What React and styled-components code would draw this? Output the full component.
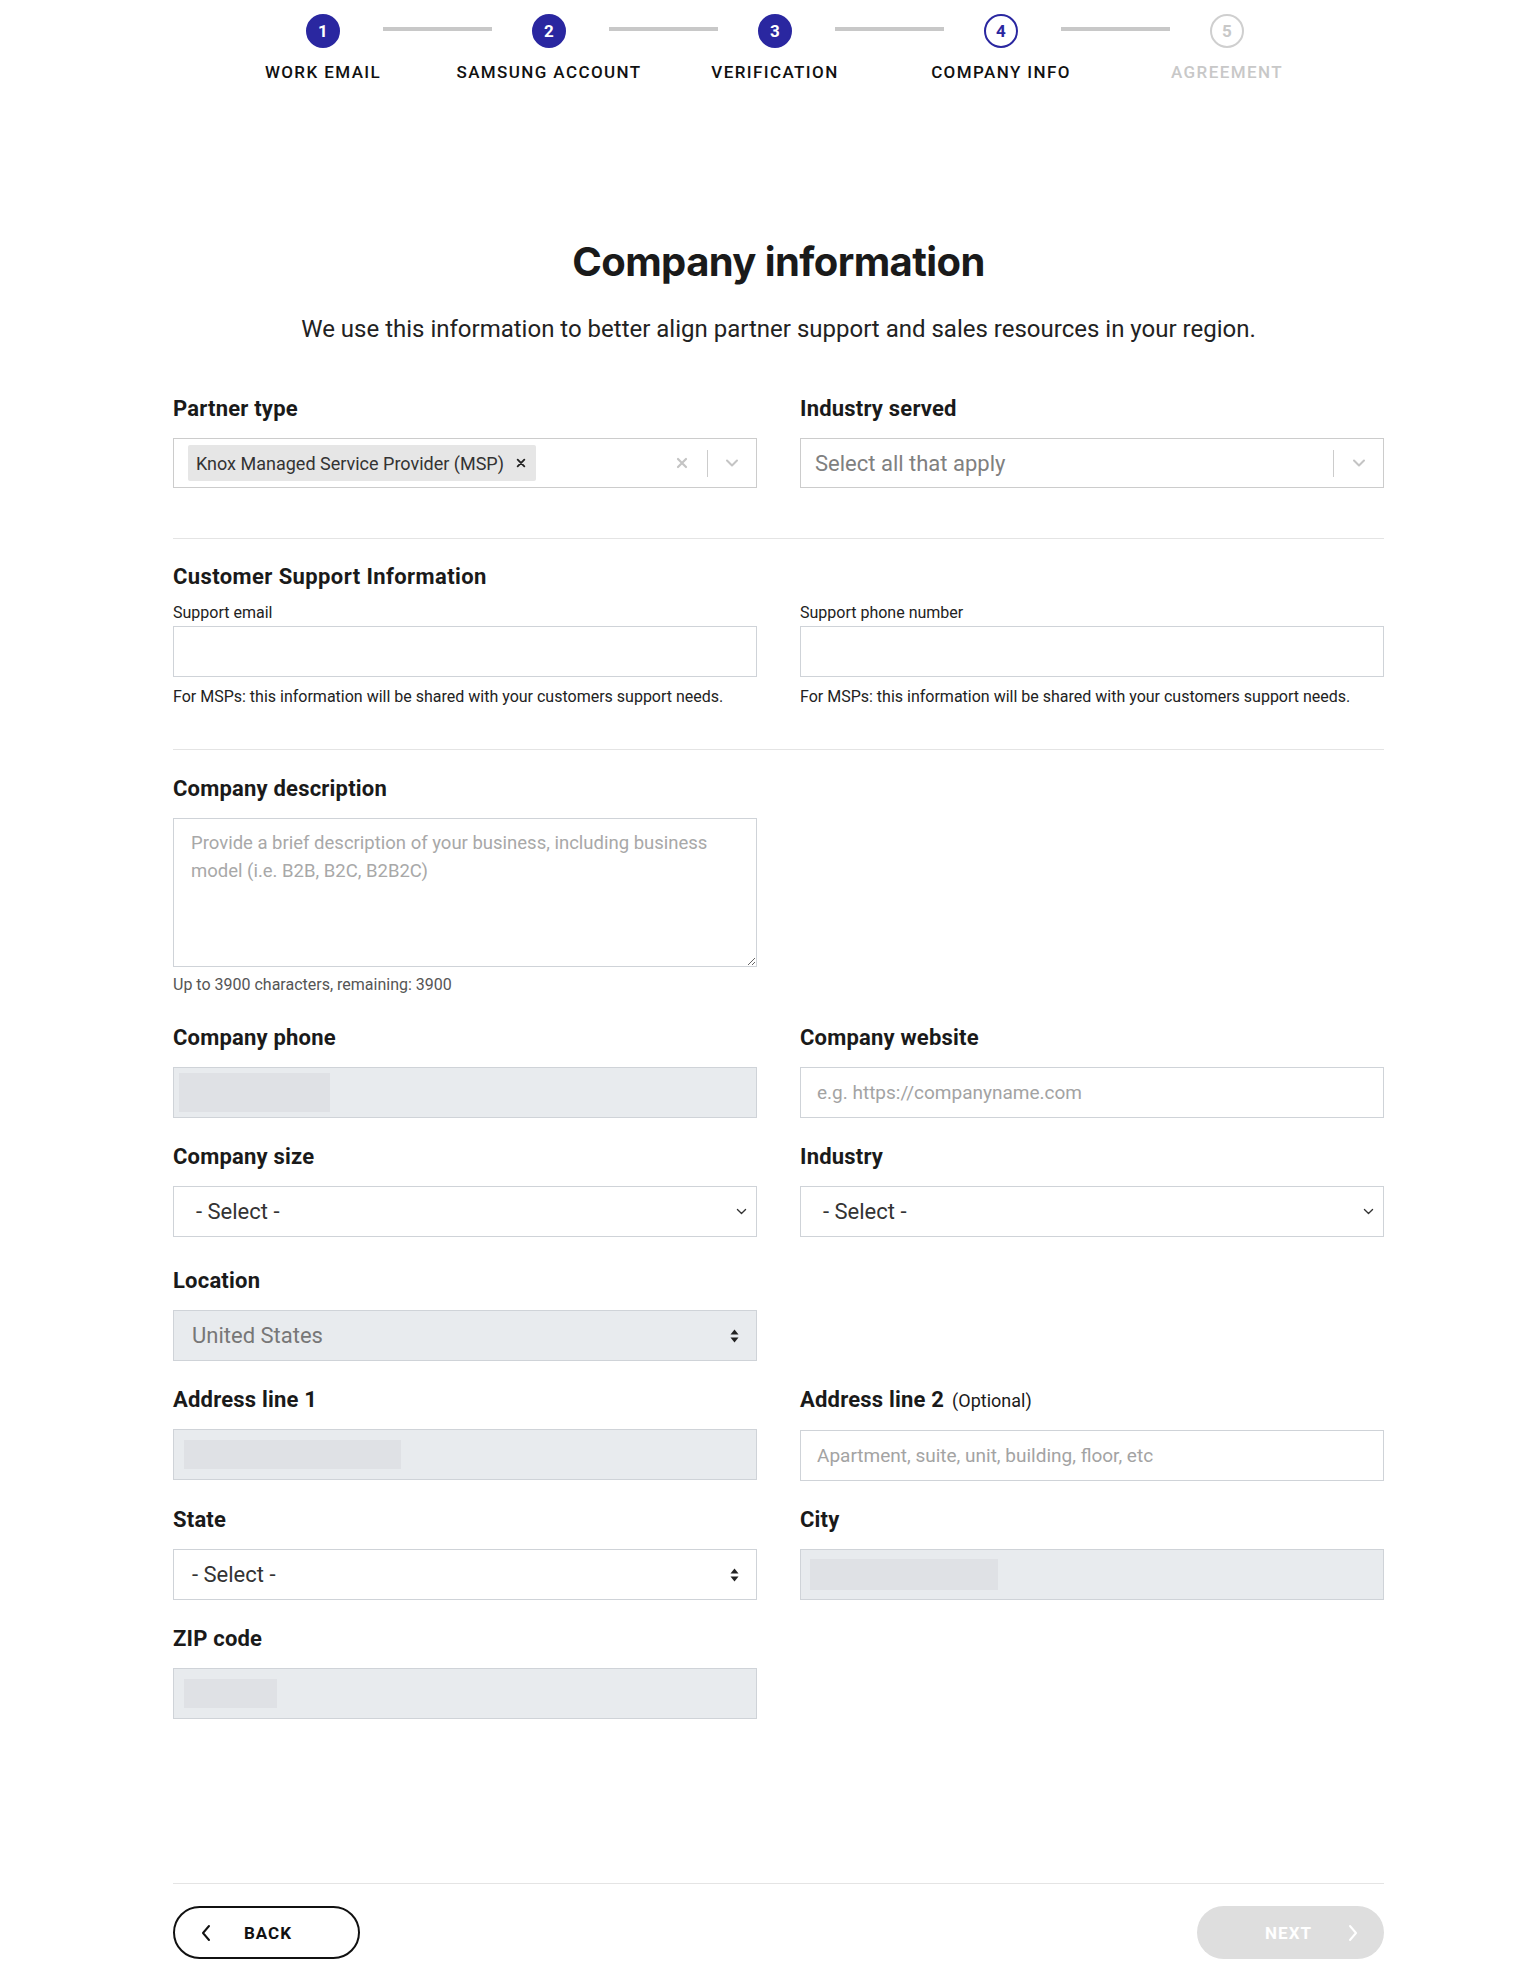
import React from 'react';
import styled, { createGlobalStyle } from 'styled-components';

const GlobalStyle = createGlobalStyle`
  * { box-sizing: border-box; }
  body {
    margin: 0;
    background: #fff;
    font-family: Roboto, "Noto Sans", Arial, sans-serif;
    color: #1c1c1c;
  }
`;

const BRAND = '#2a27a0';

const Page = styled.div`
  width: 1211px;
  margin-left: 173px;
  padding: 14px 0 22px;
`;

/* ---------- stepper ---------- */

const Steps = styled.ol`
  display: flex;
  list-style: none;
  margin: 0 0 0 37px;
  padding: 0;
`;

const Step = styled.li`
  position: relative;
  width: 226px;
  display: flex;
  flex-direction: column;
  align-items: center;

  &:not(:last-child)::after {
    content: '';
    position: absolute;
    top: 13px;
    left: calc(50% + 60px);
    width: 109px;
    height: 4px;
    background: #c8c8c8;
  }
`;

const StepCircle = styled.span`
  width: 34px;
  height: 34px;
  border-radius: 50%;
  display: flex;
  align-items: center;
  justify-content: center;
  font-size: 17px;
  font-weight: 700;
  background: ${(p) => (p.$state === 'done' ? BRAND : '#fff')};
  color: ${(p) => (p.$state === 'done' ? '#fff' : p.$state === 'current' ? BRAND : '#c8c8c8')};
  border: 2.5px solid ${(p) => (p.$state === 'todo' ? '#cfcfcf' : BRAND)};
`;

const StepLabel = styled.span`
  margin-top: 14px;
  font-size: 17px;
  line-height: 20px;
  font-weight: 500;
  letter-spacing: 1.4px;
  white-space: nowrap;
  color: ${(p) => (p.$state === 'todo' ? '#c8c8c8' : '#111')};
`;

/* ---------- heading ---------- */

const Title = styled.h1`
  margin: 156px 0 0;
  font-family: Inter, "Noto Sans", sans-serif;
  font-size: 40px;
  line-height: 48px;
  font-weight: 700;
  letter-spacing: -0.6px;
  text-align: center;
  color: #1a1a1a;
`;

const Intro = styled.p`
  margin: 28px 0 0;
  font-size: 24px;
  line-height: 30px;
  text-align: center;
  color: #222;
`;

/* ---------- form layout ---------- */

const Grid = styled.div`
  display: grid;
  grid-template-columns: 584px 584px;
  column-gap: 43px;
  row-gap: ${(p) => p.$rowGap ?? 25}px;
  margin-top: ${(p) => p.$top ?? 0}px;
`;

const Field = styled.div`
  display: flex;
  flex-direction: column;
  margin-top: ${(p) => p.$top ?? 0}px;
`;

const Label = styled.label`
  font-size: 22px;
  line-height: 28px;
  font-weight: 700;
  letter-spacing: 0.2px;
  color: #1a1a1a;
  margin-bottom: 15px;
`;

const Optional = styled.span`
  font-size: 18px;
  font-weight: 400;
  letter-spacing: 0;
  margin-left: 8px;
`;

const SectionTitle = styled.h3`
  margin: 0 0 12px;
  font-size: 22px;
  line-height: 28px;
  font-weight: 700;
  letter-spacing: 0.4px;
  color: #1a1a1a;
`;

const SubLabel = styled.label`
  font-size: 16px;
  line-height: 20px;
  color: #222;
  margin-bottom: 3px;
`;

const Help = styled.p`
  margin: 10px 0 0;
  font-size: 16px;
  line-height: 20px;
  color: #222;
`;

const Counter = styled.p`
  margin: 8px 0 0;
  font-size: 16px;
  line-height: 20px;
  color: #555;
`;

const Divider = styled.hr`
  border: 0;
  height: 1px;
  background: #e4e4e4;
  margin: ${(p) => p.$top}px 0 ${(p) => p.$bottom}px;
`;

const TextInput = styled.input`
  height: ${(p) => p.$h ?? 51}px;
  width: 100%;
  border: 1px solid #cfd3d8;
  background: #fff;
  padding: 0 16px;
  font-family: inherit;
  font-size: 19px;
  color: #222;
  outline: none;

  &::placeholder {
    color: #a3a3a3;
  }
`;

const TextArea = styled.textarea`
  height: 149px;
  width: 100%;
  border: 1px solid #cfd3d8;
  padding: 10px 17px;
  font-family: inherit;
  font-size: 18.5px;
  line-height: 28px;
  color: #222;
  outline: none;
  resize: vertical;

  &::placeholder {
    color: #a8a8a8;
  }
`;

const Disabled = styled.div`
  height: 51px;
  background: #e8ebee;
  border: 1px solid #cfd3d8;
  padding: ${(p) => p.$inset}px;
`;

const Skeleton = styled.div`
  height: 100%;
  width: ${(p) => p.$w}px;
  background: #dfe1e5;
`;

const SelectBox = styled.div`
  height: 51px;
  display: flex;
  align-items: center;
  justify-content: space-between;
  padding: 0 ${(p) => p.$padRight ?? 8}px 0 ${(p) => p.$padLeft ?? 22}px;
  border: 1px solid #cfd3d8;
  background: ${(p) => (p.$disabled ? '#e8ebee' : '#fff')};
  font-size: 22px;
  color: ${(p) => (p.$disabled ? '#777' : '#333')};
`;

/* ---------- react-select look-alike ---------- */

const Multi = styled.div`
  height: 50px;
  display: flex;
  align-items: center;
  border: 1px solid #cccccc;
  padding-left: 14px;
`;

const ValueArea = styled.div`
  flex: 1;
  display: flex;
  align-items: center;
`;

const Placeholder = styled.span`
  font-size: 22px;
  color: #808080;
`;

const Chip = styled.span`
  display: inline-flex;
  align-items: center;
  gap: 12px;
  height: 36px;
  padding: 0 10px 0 8px;
  background: #e6e6e6;
  border-radius: 2px;
  font-size: 18px;
  color: #333;
`;

const Indicators = styled.div`
  display: flex;
  align-items: center;
  height: 100%;
`;

const IconSlot = styled.span`
  width: ${(p) => p.$w ?? 25}px;
  display: flex;
  align-items: center;
  justify-content: center;
`;

const Separator = styled.span`
  width: 1px;
  height: 27px;
  background: #cccccc;
`;

/* ---------- footer ---------- */

const Footer = styled.div`
  display: flex;
  justify-content: space-between;
`;

const NavButton = styled.button`
  width: 187px;
  height: 53px;
  border-radius: 27px;
  display: flex;
  align-items: center;
  gap: ${(p) => p.$gap}px;
  padding: 0 ${(p) => p.$padR}px 0 ${(p) => p.$padL}px;
  font-family: inherit;
  font-size: 17px;
  font-weight: 700;
  letter-spacing: 1px;
  border: ${(p) => (p.$primary ? '0' : '2px solid #111')};
  background: ${(p) => (p.$primary ? '#dedede' : '#fff')};
  color: ${(p) => (p.$primary ? '#fff' : '#111')};
  justify-content: ${(p) => (p.$primary ? 'flex-end' : 'flex-start')};
`;

/* ---------- icons ---------- */

const ChevronDown = ({ size = 14, color = '#333', stroke = 1.6 }) => (
  <svg width={size} height={size} viewBox="0 0 16 16" fill="none">
    <polyline points="3,5.5 8,10.5 13,5.5" stroke={color} strokeWidth={stroke} strokeLinecap="round" strokeLinejoin="round" />
  </svg>
);

const SortArrows = () => (
  <svg width="9" height="14" viewBox="0 0 9 14">
    <polygon points="4.5,0.5 8.5,5.5 0.5,5.5" fill="#222" />
    <polygon points="0.5,8.5 8.5,8.5 4.5,13.5" fill="#222" />
  </svg>
);

const Cross = ({ size = 12, color = '#333', stroke = 2 }) => (
  <svg width={size} height={size} viewBox="0 0 12 12">
    <path d="M2 2 L10 10 M10 2 L2 10" stroke={color} strokeWidth={stroke} strokeLinecap="round" />
  </svg>
);

const Chevron = ({ dir = 'left', color = '#111' }) => (
  <svg width="10" height="18" viewBox="0 0 10 18" fill="none">
    <polyline
      points={dir === 'left' ? '8,2 2,9 8,16' : '2,2 8,9 2,16'}
      stroke={color}
      strokeWidth="2"
      strokeLinecap="round"
      strokeLinejoin="round"
    />
  </svg>
);

const steps = [
  { label: 'WORK EMAIL', state: 'done' },
  { label: 'SAMSUNG ACCOUNT', state: 'done' },
  { label: 'VERIFICATION', state: 'done' },
  { label: 'COMPANY INFO', state: 'current' },
  { label: 'AGREEMENT', state: 'todo' },
];

const msHelp = 'For MSPs: this information will be shared with your customers support needs.';

export default function App() {
  return (
    <>
      <GlobalStyle />
      <Page>
        <Steps>
          {steps.map((s, i) => (
            <Step key={s.label}>
              <StepCircle $state={s.state}>{i + 1}</StepCircle>
              <StepLabel $state={s.state}>{s.label}</StepLabel>
            </Step>
          ))}
        </Steps>

        <Title>Company information</Title>
        <Intro>We use this information to better align partner support and sales resources in your region.</Intro>

        <Grid $top={51}>
          <Field>
            <Label>Partner type</Label>
            <Multi>
              <ValueArea>
                <Chip>
                  Knox Managed Service Provider (MSP)
                  <Cross size={10} color="#222" stroke={2.2} />
                </Chip>
              </ValueArea>
              <Indicators>
                <IconSlot $w={26}><Cross size={12} color="#c4c4c4" stroke={2.2} /></IconSlot>
                <IconSlot $w={12} />
                <Separator />
                <IconSlot $w={48}><ChevronDown size={16} color="#c4c4c4" stroke={2} /></IconSlot>
              </Indicators>
            </Multi>
          </Field>
          <Field>
            <Label>Industry served</Label>
            <Multi>
              <ValueArea>
                <Placeholder>Select all that apply</Placeholder>
              </ValueArea>
              <Indicators>
                <Separator />
                <IconSlot $w={49}><ChevronDown size={16} color="#c4c4c4" stroke={2} /></IconSlot>
              </Indicators>
            </Multi>
          </Field>
        </Grid>

        <Divider $top={50} $bottom={24} />

        <SectionTitle>Customer Support Information</SectionTitle>
        <Grid $rowGap={0}>
          <Field>
            <SubLabel>Support email</SubLabel>
            <TextInput />
            <Help>{msHelp}</Help>
          </Field>
          <Field>
            <SubLabel>Support phone number</SubLabel>
            <TextInput />
            <Help>{msHelp}</Help>
          </Field>
        </Grid>

        <Divider $top={42} $bottom={25} />

        <Grid>
          <Field>
            <Label>Company description</Label>
            <TextArea placeholder="Provide a brief description of your business, including business model (i.e. B2B, B2C, B2B2C)" />
            <Counter>Up to 3900 characters, remaining: 3900</Counter>
          </Field>
        </Grid>

        <Grid $top={29}>
          <Field>
            <Label>Company phone</Label>
            <Disabled $inset={5}><Skeleton $w={151} /></Disabled>
          </Field>
          <Field>
            <Label>Company website</Label>
            <TextInput placeholder="e.g. https://companyname.com" />
          </Field>

          <Field>
            <Label>Company size</Label>
            <SelectBox>
              - Select -
              <ChevronDown size={13} color="#333" stroke={1.6} />
            </SelectBox>
          </Field>
          <Field>
            <Label>Industry</Label>
            <SelectBox>
              - Select -
              <ChevronDown size={13} color="#333" stroke={1.6} />
            </SelectBox>
          </Field>

          <Field $top={5}>
            <Label>Location</Label>
            <SelectBox $disabled $padLeft={18} $padRight={17}>
              United States
              <SortArrows />
            </SelectBox>
          </Field>
          <div />

          <Field>
            <Label>Address line 1</Label>
            <Disabled $inset={10}><Skeleton $w={217} /></Disabled>
          </Field>
          <Field>
            <Label>
              Address line 2<Optional>(Optional)</Optional>
            </Label>
            <TextInput placeholder="Apartment, suite, unit, building, floor, etc" />
          </Field>

          <Field>
            <Label>State</Label>
            <SelectBox $padLeft={18} $padRight={17}>
              - Select -
              <SortArrows />
            </SelectBox>
          </Field>
          <Field>
            <Label>City</Label>
            <Disabled $inset={9}><Skeleton $w={188} /></Disabled>
          </Field>

          <Field>
            <Label>ZIP code</Label>
            <Disabled $inset={10}><Skeleton $w={93} /></Disabled>
          </Field>
        </Grid>

        <Divider $top={164} $bottom={22} />

        <Footer>
          <NavButton $padL={26} $padR={0} $gap={33}>
            <Chevron dir="left" />
            BACK
          </NavButton>
          <NavButton $primary $padL={0} $padR={26} $gap={36}>
            NEXT
            <Chevron dir="right" color="#fff" />
          </NavButton>
        </Footer>
      </Page>
    </>
  );
}
